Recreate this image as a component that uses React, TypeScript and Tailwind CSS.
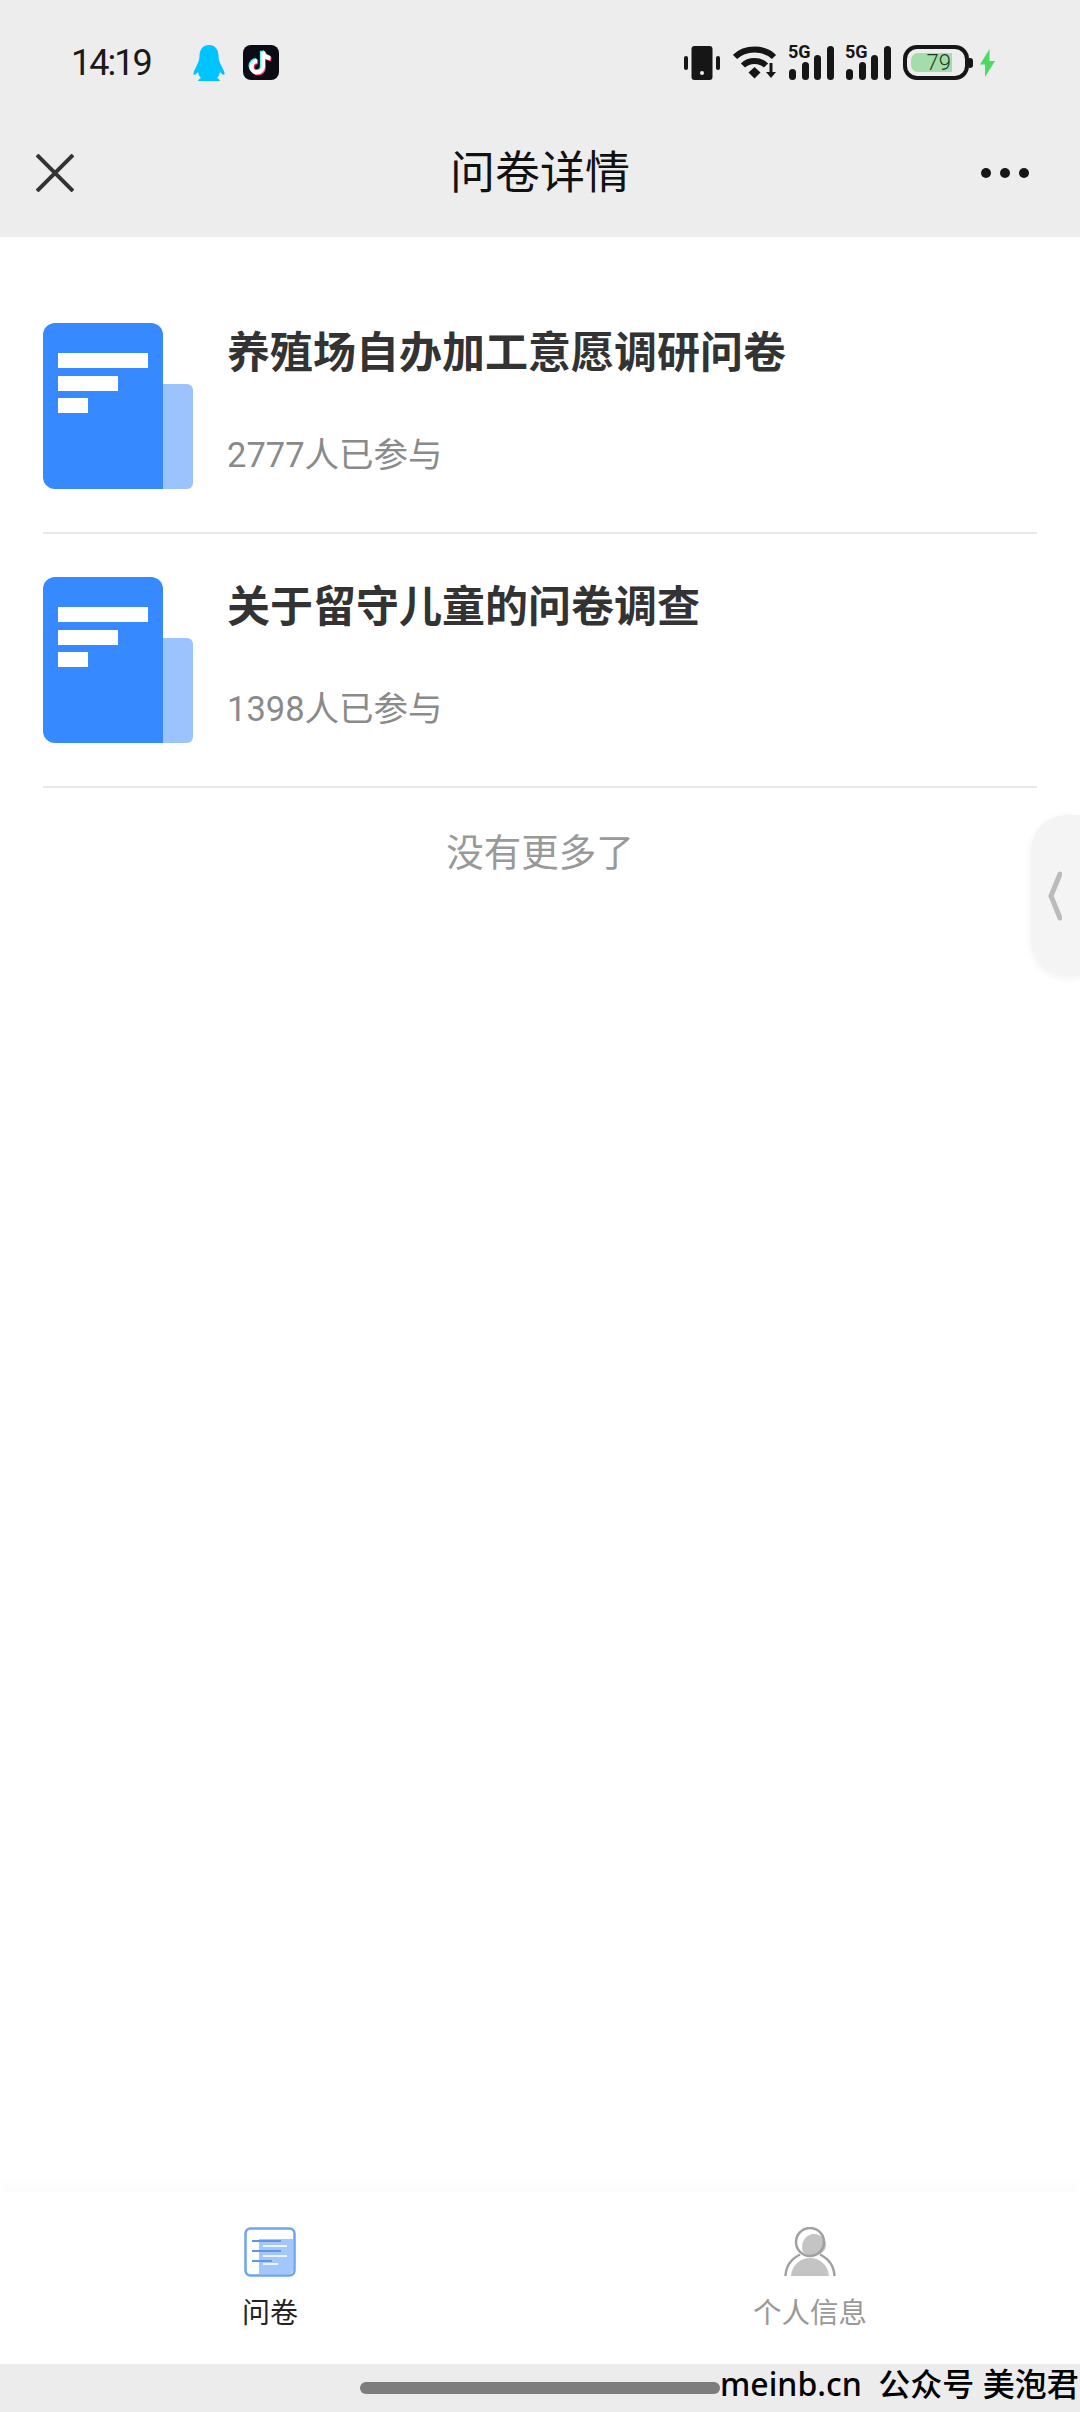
const surveys = [
  { title: '养殖场自办加工意愿调研问卷', joined: '2777人已参与' },
  { title: '关于留守儿童的问卷调查', joined: '1398人已参与' },
]

function QQIcon() {
  return (
    <svg width="32" height="36" viewBox="0 0 32 36">
      <path
        fill="#00c4ff"
        d="M16 0C10 0 6.500 4.500 6.500 11 6.500 15 5 18 3 22 1.500 25 0 28 .5 29.500 1.500 30.500 3.500 29 5 27 5.500 29.500 6.500 31.500 8 33 6.500 33.500 5.500 34.500 5 36H27C26.500 34.500 25.500 33.500 24 33 25.500 31.500 26.500 29.500 27 27 28.500 29 30.500 30.500 31.500 29.500 32 28 30.500 25 29 22 27 18 25.500 15 25.500 11 25.500 4.500 22 0 16 0Z"
      />
    </svg>
  )
}

function TikTokIcon() {
  const note = 'M20 6v16a6 6 0 1 1-6-6 M20 6c.7 4 3.500 6.500 8 7'
  return (
    <div className="flex h-[35px] w-[36px] items-center justify-center rounded-[8px] bg-[#0b0b16]">
      <svg width="34" height="34" viewBox="0 0 36 36" fill="none" strokeWidth="4.500">
        <path d={note} stroke="#25f4ee" transform="translate(-1 -1)" />
        <path d={note} stroke="#fe2c55" transform="translate(1 1)" />
        <path d={note} stroke="#ffffff" />
      </svg>
    </div>
  )
}

function VibrateIcon() {
  return (
    <svg width="36" height="34" viewBox="0 0 36 34" fill="#161616">
      <rect x="7.500" y="0" width="21" height="34" rx="3" />
      <rect x="0" y="10" width="4" height="14" rx="2" />
      <rect x="32" y="10" width="4" height="14" rx="2" />
      <circle cx="18" cy="27" r="2" fill="#ededed" />
    </svg>
  )
}

function WifiIcon() {
  return (
    <svg width="45" height="34" viewBox="0 0 45 34" fill="none" stroke="#161616" strokeWidth="6">
      <path d="M2 11C12 1 31 1 41 11" />
      <path d="M10 19.500c6-6 17-6 23 0" />
      <path d="M15.500 26.500l6-5.500 6 5.500-6 6z" fill="#161616" stroke="none" />
      <path d="M38 17v12" strokeWidth="3" />
      <path d="M33 26h10l-5 6z" fill="#161616" stroke="none" />
    </svg>
  )
}

function SignalIcon() {
  return (
    <div className="relative h-[34px] w-[46px]">
      <span className="absolute left-0 top-[-5px] text-[18px] leading-[22px] font-bold text-[#161616]">5G</span>
      <div className="absolute inset-0 flex items-end gap-[5.500px] pl-[1px]">
        <span className="h-[11px] w-[7px] rounded-[3.500px] bg-[#161616]" />
        <span className="h-[18px] w-[7px] rounded-[3.500px] bg-[#161616]" />
        <span className="h-[25px] w-[7px] rounded-[3.500px] bg-[#161616]" />
        <span className="h-[34px] w-[7px] rounded-[3.500px] bg-[#161616]" />
      </div>
    </div>
  )
}

function BatteryIcon() {
  return (
    <div className="flex items-center">
      <div className="flex h-[35px] w-[66px] items-center rounded-[14px] border-[4px] border-[#161616] pl-[4px]">
        <div className="flex h-[19px] w-[41px] items-center justify-end rounded-l-[7px] bg-[#a5dcab] pr-[1px] text-[22px] leading-none font-light text-[#1c3a22]">
          79
        </div>
      </div>
      <span className="h-[10px] w-[4px] rounded-r-[3px] bg-[#161616]" />
    </div>
  )
}

function BoltIcon() {
  return (
    <svg width="15" height="28" viewBox="0 0 15 28">
      <path fill="#4cd964" d="M9.500 0L0 15.500h5L5 28l10-16H9.500z" />
    </svg>
  )
}

function SurveyIcon() {
  return (
    <div className="relative h-[166px] w-[150px] shrink-0">
      <div className="absolute bottom-0 right-0 h-[105px] w-[40px] rounded-r-[6px] bg-[#9bc3fe]" />
      <div className="absolute left-0 top-0 h-[166px] w-[120px] rounded-l-[12px] rounded-tr-[12px] bg-[#3689fe] pl-[15px] pt-[30px]">
        <div className="h-[15px] w-[90px] bg-white" />
        <div className="mt-[8px] h-[15px] w-[60px] bg-white" />
        <div className="mt-[7px] h-[15px] w-[30px] bg-white" />
      </div>
    </div>
  )
}

function SurveyTabIcon() {
  return (
    <svg width="52" height="50" viewBox="0 0 52 50" fill="none">
      <rect x="1.500" y="1.500" width="49" height="47" rx="5" fill="#ffffff" stroke="#6fa4ee" strokeWidth="2.500" />
      <path d="M15 12h34v31a4 4 0 0 1-4 4H15z" fill="#a3c6fb" />
      <g stroke="#5f97e6" strokeWidth="2">
        <path d="M8 14h29" />
        <path d="M8 24h29" />
        <path d="M8 34h20" />
      </g>
      <g stroke="#ffffff" strokeOpacity="0.8" strokeWidth="2">
        <path d="M19 19h24" />
        <path d="M19 29h24" />
        <path d="M19 37h15" />
      </g>
    </svg>
  )
}

function ProfileTabIcon() {
  return (
    <svg width="52" height="50" viewBox="0 0 52 50" fill="none">
      <path d="M19 25c-3-8 2-18 11-18 7 0 12 5 12 11 0 5-4 9-9 10-5 1-11 0-14-3z" fill="#c4c4c4" />
      <path d="M7 49c1-11 9-18 19-18s18 7 19 18z" fill="#c4c4c4" />
      <circle cx="26" cy="15" r="14" stroke="#a0a0a0" strokeWidth="2.500" fill="none" />
      <path d="M1.500 49C2 38 9 31 16 27.500M50.500 49C50 38 43 31 36 27.500" stroke="#a0a0a0" strokeWidth="2.500" />
    </svg>
  )
}

export default function App() {
  return (
    <div className="relative flex h-[2412px] w-[1080px] flex-col overflow-hidden bg-white font-['Roboto','Noto_Sans_CJK_SC',sans-serif]">
      {/* Status bar + title bar */}
      <header className="h-[237px] shrink-0 bg-[#ededed]">
        <div className="flex h-[125px] items-center pl-[71px] pr-[85px]">
          <span className="w-[122px] text-[36px] leading-none tracking-[-2px] text-[#1a1a1a]">14:19</span>
          <QQIcon />
          <div className="ml-[18px]">
            <TikTokIcon />
          </div>
          <div className="ml-auto flex items-center">
            <VibrateIcon />
            <div className="ml-[13px]"><WifiIcon /></div>
            <div className="ml-[10px]"><SignalIcon /></div>
            <div className="ml-[11px]"><SignalIcon /></div>
            <div className="ml-[12px]"><BatteryIcon /></div>
            <div className="ml-[7px]"><BoltIcon /></div>
          </div>
        </div>
        <div className="grid h-[96px] grid-cols-3 items-center pl-[36px] pr-[51px]">
          <svg width="38" height="38" viewBox="0 0 38 38" stroke="#333333" strokeWidth="4">
            <path d="M1 1l36 36M37 1L1 37" />
          </svg>
          <h1 className="relative left-[7.500px] text-center text-[45px] leading-none font-normal text-[#111111]">问卷详情</h1>
          <div className="flex justify-end gap-[9px]">
            <span className="h-[10px] w-[10px] rounded-full bg-[#161616]" />
            <span className="h-[10px] w-[10px] rounded-full bg-[#161616]" />
            <span className="h-[10px] w-[10px] rounded-full bg-[#161616]" />
          </div>
        </div>
      </header>

      {/* List */}
      <main className="flex-1 px-[43px] pt-[43px]">
        {surveys.map(s => (
          <div key={s.title} className="flex border-b-[2px] border-[#e9e9e9] py-[43px]">
            <SurveyIcon />
            <div className="ml-[34px]">
              <h2 className="mt-[5px] text-[43px] leading-[50px] font-bold text-[#333333]">{s.title}</h2>
              <p className="mt-[55px] text-[34.500px] leading-[44px] text-[#8a8a8a]">{s.joined}</p>
            </div>
          </div>
        ))}
        <p className="mt-[41px] text-center text-[37.500px] leading-[48px] text-[#999999]">没有更多了</p>
      </main>

      {/* Side handle */}
      <div className="absolute right-0 top-[815px] flex h-[161px] w-[49px] items-center rounded-l-[36px] bg-[#f4f4f4] pl-[17px] shadow-[0_2px_8px_rgba(0,0,0,0.06)]">
        <svg width="14" height="50" viewBox="0 0 14 50" fill="none" stroke="#bbbbbb" strokeWidth="5" strokeLinecap="round">
          <path d="M12 3L3 25l9 22" />
        </svg>
      </div>

      {/* Tab bar */}
      <nav className="grid h-[172px] shrink-0 grid-cols-2 bg-white shadow-[0_-8px_16px_rgba(0,0,0,0.02)]">
        <div className="flex flex-col items-center pt-[35px]">
          <SurveyTabIcon />
          <span className="mt-[19px] text-[28px] leading-[36px] text-[#222222]">问卷</span>
        </div>
        <div className="flex flex-col items-center pt-[35px]">
          <ProfileTabIcon />
          <span className="mt-[19px] text-[28.500px] leading-[36px] text-[#999999]">个人信息</span>
        </div>
      </nav>

      {/* System gesture bar */}
      <div className="relative flex h-[48px] shrink-0 items-center bg-[#ececec] pl-[360px]">
        <div className="h-[12px] w-[360px] rounded-full bg-[#7d7d7d]" />
        <span className="absolute left-[720px] top-[-2px] whitespace-nowrap font-['Noto_Sans','Noto_Sans_CJK_SC',sans-serif] text-[32px] leading-[44px] font-medium text-black">
          meinb.cn&nbsp; 公众号 美泡君
        </span>
      </div>
    </div>
  )
}
